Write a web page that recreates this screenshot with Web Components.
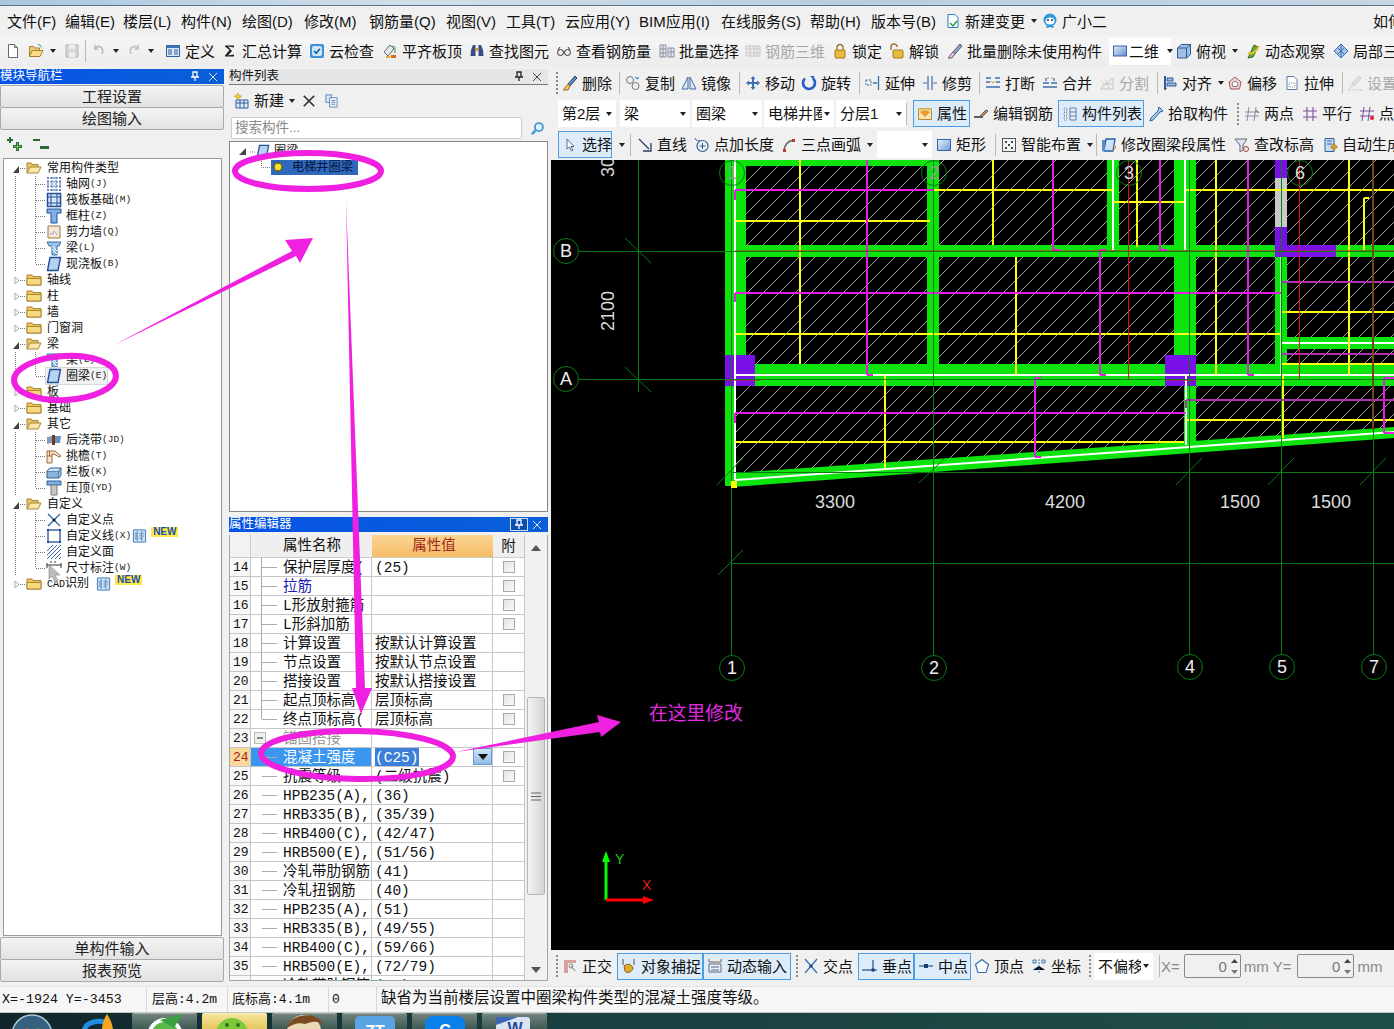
<!DOCTYPE html>
<html lang="zh">
<head>
<meta charset="utf-8">
<title>钢筋算量</title>
<style>
html, body { margin: 0; padding: 0; height: 100%; overflow: hidden; background: #f0f0f0; }
body { position: relative; font-family: "Liberation Sans", "Noto Sans CJK SC", sans-serif; }
</style>
</head>
<body>
<gl-app>
  <gl-nav-panel slot="nav"></gl-nav-panel>
  <gl-list-panel slot="list"></gl-list-panel>
  <gl-prop-panel slot="prop"></gl-prop-panel>
  <gl-draw-area slot="draw"></gl-draw-area>
</gl-app>
<gl-callouts></gl-callouts>
<script>
const CJK = '"Liberation Sans", "Noto Sans CJK SC", sans-serif';
const MONO = '"Liberation Mono", "Noto Sans CJK SC", monospace';

// 16x16 toolbar pictures
const ICONS = {
  doc: '<path d="M3.5 1.5h6l3 3v10h-9z" fill="#fff" stroke="#667"/><path d="M9.5 1.5v3h3" fill="#dde" stroke="#667"/>',
  open: '<path d="M1.5 13.5v-10h4l1 1.500h5v2" fill="#f0cf78" stroke="#a57f2a"/><path d="M1.500 13.500l2.500-6h11l-3 6z" fill="#f6dc8c" stroke="#a57f2a"/><path d="M10 1.500c2 0 3 1 3 3" fill="none" stroke="#3a7"/>',
  save: '<path d="M2 2h12v12H2z" fill="#d5d5d5" stroke="#b5b5b5"/><path d="M5 2h6v4H5zM5 9h6v5H5z" fill="#eee"/>',
  undo: '<path d="M5 4c5-2 8 2 6 7" fill="none" stroke="#c2c2c2" stroke-width="2"/><path d="M3 1v6h5z" fill="#c2c2c2"/>',
  redo: '<path d="M11 4c-5-2-8 2-6 7" fill="none" stroke="#c9c9c9" stroke-width="2"/><path d="M13 1v6H8z" fill="#c9c9c9"/>',
  def: '<path d="M1.500 2.500h13v11h-13z" fill="#dbe7f7" stroke="#2f5f9f"/><path d="M1.500 2.500h13v2.500h-13z" fill="#3f74b8"/><path d="M3 7h4M3 9h4M3 11h4M9 7h4M9 9h4M9 11h4" stroke="#2f5f9f"/>',
  sigma: '<path d="M3 2.500h9v2L6 3.500l4 4.500-4 4.500 6-1v2H3v-1l4.500-5.500L3 3.500z" fill="#222"/>',
  cloud: '<rect x="1" y="1" width="14" height="14" rx="2" fill="#3d8fd8"/><rect x="3" y="3" width="10" height="10" rx="2" fill="#cfe5f8"/><path d="M5 8l2.200 2.200L11 5.800" fill="none" stroke="#1f62a8" stroke-width="1.700"/>',
  flush: '<path d="M2 9l6-7 4 4-6 7z" fill="#e6e6e6" stroke="#666"/><path d="M9 12h5v3H9z" fill="#d8651c"/><path d="M4 13h4v2H4z" fill="#e5a92a"/><path d="M10 3l3 1v6" fill="none" stroke="#3a9b3a"/>',
  find: '<path d="M2 7l2-5h2.500v11H1.500zM14 7l-2-5H9.500v11h5z" fill="#3a4b88"/><path d="M6.500 5h3v3h-3z" fill="#c59a2c"/>',
  look: '<circle cx="4.500" cy="9.500" r="3" fill="none" stroke="#333"/><circle cx="11.500" cy="9.500" r="3" fill="none" stroke="#333"/><path d="M7.500 9h1M2 7l2-3M14 7l-2-3" stroke="#333"/>',
  batch: '<path d="M1 2h6v12H1zM9 5h6v9H9z" fill="#e4e6ec" stroke="#8b8fa3"/><path d="M4 2v12M1 6h6M1 10h6M12 5v9M9 9h6" stroke="#8b8fa3"/>',
  grid3: '<path d="M1 3h14v10H1z" fill="#eee" stroke="#c6c6c6"/><path d="M5 3v10M9 3v10M12 3v10M1 6h14M1 10h14" stroke="#c6c6c6"/>',
  lock: '<path d="M5 7V4.500a3 3 0 0 1 6 0V7" fill="none" stroke="#9a7b2c" stroke-width="1.400"/><rect x="3" y="7" width="10" height="8" rx="1" fill="#e8ba3f" stroke="#a37b1b"/>',
  unlock: '<path d="M2 7V4a3 3 0 0 1 6 0" fill="none" stroke="#9a7b2c" stroke-width="1.400"/><rect x="4" y="7" width="10" height="8" rx="1" fill="#e8ba3f" stroke="#a37b1b"/>',
  brush: '<path d="M13 1l2 2-7 8-2-2z" fill="#8fa6c4" stroke="#556"/><path d="M6 9l2 2-3 4-4 0c2-1 2-4 5-6z" fill="#d9c7ea" stroke="#756"/>',
  plane: '<rect x="1.500" y="3" width="13" height="10" fill="url(#gb)" stroke="#3563a8"/><defs><linearGradient id="gb" x1="0" y1="0" x2="1" y2="1"><stop offset="0" stop-color="#e8f0fb"/><stop offset="1" stop-color="#5d8ed0"/></linearGradient></defs>',
  cube: '<path d="M1.500 5l4-3.500h9v10l-4 3.500h-9z" fill="#9fc0e4" stroke="#2c5c90"/><path d="M1.500 5h9v10M10.500 5l4-3.500" fill="none" stroke="#2c5c90"/>',
  orbit: '<path d="M9 2l4 2-5 10-5 1z" fill="#63a83a" stroke="#3a6a22"/><path d="M3 10c4 2 9-2 11-7" fill="none" stroke="#e6c22f" stroke-width="2"/>',
  local: '<path d="M8 1l7 7-7 7-7-7z" fill="#a7c4ea" stroke="#3f6fb0"/><path d="M4 4l8 8M12 4l-8 8M8 1v14" stroke="#3f6fb0"/>',
  del: '<path d="M13 1l2 2-7 8-2-2z" fill="#5b8ac7" stroke="#345"/><path d="M6 9l2 2-2 4-5 0c2-1 2-4 5-6z" fill="#eec64a" stroke="#964"/>',
  copy: '<circle cx="5" cy="5" r="3.500" fill="none" stroke="#777"/><circle cx="10.500" cy="11" r="3.500" fill="none" stroke="#777"/><path d="M10 2l3 2M13 4l0-2" stroke="#2e6fb8"/>',
  mirror: '<path d="M7 2v12H1zM9 2v12h6z" fill="#dfe9f6" stroke="#416b9e"/>',
  move: '<path d="M8 1l2.500 3h-1.500v3h3V5.500l3 2.500-3 2.500V9h-3v3h1.500L8 15l-2.500-3H7V9H4v1.500L1 8l3-2.500V7h3V4H5.500z" fill="#3f73ad"/>',
  rotate: '<path d="M4 3.500a6 6 0 1 0 8 0" fill="none" stroke="#2260c4" stroke-width="2.600"/><path d="M9 1h4v4z" fill="#2260c4"/>',
  extend: '<path d="M1 5h5v5H1z" fill="none" stroke="#3d6fa8" stroke-dasharray="2 1"/><path d="M8 8h4M13.500 1v14" stroke="#3d6fa8" stroke-width="1.300"/>',
  trim: '<path d="M6 1v14M10 1v14M1 8h4M11 8h4" stroke="#3d6fa8" stroke-width="1.200"/>',
  breakk: '<path d="M1 3h5M10 3h5M1 12h14M1 7h4M11 7h4" stroke="#3d6fa8" stroke-width="1.300"/><path d="M6 6l2 2 2-2" fill="none" stroke="#c09a2a"/>',
  merge: '<path d="M1 12h14M1 8h6M9 8h6M4 3v3M12 3v3" stroke="#3d6fa8" stroke-width="1.300"/><path d="M5 3h2M9 3h2" stroke="#c09a2a"/>',
  split: '<path d="M1 14L14 3v11z" fill="#eee" stroke="#c7c7c7"/><path d="M3 9h10M7 5l3 9" stroke="#c7c7c7"/>',
  alignl: '<path d="M3 1v14" stroke="#2f5f9f" stroke-width="2"/><path d="M5 3h6v3H5zM5 8h9v3H5z" fill="#9ab9df" stroke="#2f5f9f"/><path d="M3 14l2-1" stroke="#c22"/>',
  offset: '<path d="M8 2l6 5-1.500 7h-9L2 7z" fill="#f1d3cf" stroke="#a55"/><path d="M8 6l3 2.500-1 3H6l-1-3z" fill="#fff" stroke="#777"/>',
  stretch: '<path d="M3 1.500h7l3 3v10H3z" fill="#fff" stroke="#5a7fa8"/><path d="M5 8h6v4H5z" fill="none" stroke="#888" stroke-dasharray="1 1"/>',
  setg: '<path d="M12 1l2 2-7 8-2-2zM5 10l-3 4" fill="#e4e4e4" stroke="#c6c6c6"/><path d="M1 15h14" stroke="#c6c6c6" stroke-dasharray="2 1"/>',
  prop: '<path d="M1.500 2.500h13v11h-13z" fill="#f6e4b4" stroke="#b88a2c"/><path d="M3 6l5 5 5-5-5-2z" fill="#e89a2c"/><path d="M1.500 2.500h13V5h-13z" fill="#e9c77a"/>',
  edit: '<path d="M1 11h9" stroke="#222" stroke-width="1.400"/><path d="M7 10l6-6 2 1-6 6z" fill="#c49a4a" stroke="#555"/>',
  list: '<path d="M2 2h3v3H2zM2 6.500h3v3H2zM2 11h3v3H2z" fill="none" stroke="#888" stroke-dasharray="1 1"/><path d="M8 2h6v12H8z" fill="#e6eef8" stroke="#5f7fa8"/><path d="M8 6h6M8 10h6" stroke="#5f7fa8"/>',
  pick: '<path d="M11 1l4 4-3 1-7 8-3 1 1-3 7-7z" fill="#aad0f0" stroke="#245c94"/>',
  twopt: '<path d="M5 1l-2 14M12 1l-2 14M1 6h14M1 10h14" stroke="#8a8fa8"/><path d="M12 4l3 3" stroke="#c0392b"/>',
  para: '<path d="M5 1v14M11 1v14M1 5h14M1 11h14" stroke="#7a4f9f" stroke-width="1.100"/>',
  ptang: '<path d="M5 1l-2 14M11 1l-2 14M1 5h14M1 10h14" stroke="#7a4f9f"/><circle cx="13" cy="12" r="2" fill="#d22"/>',
  cursor: '<path d="M5 2v10l2.500-2 2 4 1.500-1-2-3.500h3z" fill="#fff" stroke="#667"/>',
  line: '<path d="M2 2l10 10" stroke="#28405f" stroke-width="1.300"/><path d="M14 6v8H6" fill="none" stroke="#28405f" stroke-width="1.300"/>',
  ptlen: '<circle cx="8.500" cy="9" r="5.500" fill="none" stroke="#2c5f95" stroke-width="1.200"/><path d="M8.500 6v6M5.500 9h6" stroke="#2c5f95"/><path d="M1 1c1 3 3 3 5 2" fill="none" stroke="#2c5f95"/>',
  arc: '<path d="M3 15c0-7 3-11 10-12" fill="none" stroke="#666" stroke-width="1.600"/><path d="M11 2h3v3h-3zM2 12h3v3H2z" fill="#b5392f"/>',
  rect: '<rect x="1.500" y="2.500" width="13" height="11" fill="url(#gb2)" stroke="#3563a8"/><defs><linearGradient id="gb2" x1="0" y1="0" x2="1" y2="1"><stop offset="0" stop-color="#eef4fc"/><stop offset="1" stop-color="#6b9ad8"/></linearGradient></defs>',
  smart: '<rect x="1.500" y="1.500" width="13" height="13" fill="#f4f4f4" stroke="#555"/><path d="M4 4h2v2H4zM10 4h2v2h-2zM7 7h2v2H7zM4 10h2v2H4zM10 10h2v2h-2z" fill="#345"/>',
  modify: '<path d="M5 2h9l-2 12H3z" fill="#cfe2f6" stroke="#1f5f9f" stroke-width="1.300"/><path d="M1 3h3v11H1z" fill="#5a8fc8"/><path d="M12 8l3 2-3 4" fill="none" stroke="#c09a2a"/>',
  check: '<path d="M1 2h12L9 8v5l-3 2V8z" fill="#dde8f4" stroke="#667"/><circle cx="12" cy="12" r="2.500" fill="none" stroke="#b03a2e"/>',
  auto: '<path d="M3 1.500h9v13H3z" fill="#c7dcf4" stroke="#2f5f9f"/><path d="M5 4h5M5 7h5" stroke="#2f5f9f"/><path d="M9 9h2V7h2v2h2v2h-2v2h-2v-2H9z" fill="#d9a32a" stroke="#8a6516" stroke-width=".5"/>',
  ortho: '<path d="M2 2h12v3H6v10H2z" fill="#d8a09c"/><path d="M9 8l4 5" stroke="#777"/><circle cx="9" cy="8" r="2" fill="none" stroke="#888"/>',
  snap: '<path d="M2 1v6M13 1v6" stroke="#555"/><path d="M3 8c3-3 8-2 9 2 0 4-7 6-8 3z" fill="#e0a92f" stroke="#8a6516"/>',
  dyn: '<path d="M2 1v3h12V1M2 6h12v8H2z" fill="#f0f0f0" stroke="#666"/><path d="M4 9h8M4 12h8" stroke="#3a6aa8"/>',
  cross: '<path d="M2 1l12 14M14 1L2 15" stroke="#3a70b0" stroke-width="1.300"/><circle cx="8" cy="8" r="1.600" fill="#1f3f70"/>',
  perp: '<path d="M0 12h15" stroke="#2a5a98" stroke-width="1.300"/><path d="M11 2v10" stroke="#2a5a98" stroke-width="1.300"/><circle cx="11" cy="12" r="1.800" fill="#1f3f70"/>',
  mid: '<path d="M1 8h14" stroke="#2a5a98" stroke-width="1.200"/><rect x="6" y="6" width="4" height="4" fill="#1f3f70"/>',
  vertex: '<path d="M8 1.500l6.500 5-2.500 8H4l-2.500-8z" fill="#fff" stroke="#3a70b0" stroke-width="1.200"/>',
  coord: '<path d="M8 1v14M2 12L8 8l6 4" stroke="#3a70b0" stroke-dasharray="2 1"/><path d="M2 2h3v3H2zM11 2h3v3h-3z" fill="none" stroke="#3a70b0"/>',
  newb: '<path d="M2 7h12v8H2z" fill="#e2edf8" stroke="#2f5f9f"/><path d="M2 10h12M6 7v8M10 7v8" stroke="#2f5f9f"/><path d="M4 0l1.200 2.400L7.600 3 5.600 5 4 6 2.400 5 .5 3l2.400-.6z" fill="#eecb2e" stroke="#a88a10" stroke-width=".5"/>',
  x: '<path d="M2 2l12 12M14 2L2 14" stroke="#333" stroke-width="2"/>',
  dup: '<path d="M2 2h6v8H2z" fill="#dbe7f5" stroke="#5f86b5"/><path d="M6 5h8v10H6z" fill="#eef4fb" stroke="#5f86b5"/><path d="M8 8h4M8 10h4M8 12h4" stroke="#5f86b5"/>',
  search: '<circle cx="9.500" cy="6.500" r="4.300" fill="#e5f2fb" stroke="#4a9ad4" stroke-width="2"/><path d="M6.500 9.500L2 14" stroke="#4a9ad4" stroke-width="2.600"/>',
  changeDoc: '<path d="M3 1.500h7l3 3v10H3z" fill="#fff" stroke="#2f7fb8"/><path d="M5 10l3 3 4-5" fill="none" stroke="#2a9a4a" stroke-width="1.500"/>',
  robot: '<circle cx="8" cy="7" r="6.500" fill="#2d96dd"/><ellipse cx="8" cy="8" rx="4.500" ry="3.500" fill="#fff"/><circle cx="6" cy="7" r="1" fill="#135"/><circle cx="10" cy="7" r="1" fill="#135"/><path d="M4 13l1 2 3-1 3 1 1-2z" fill="#2d96dd"/>'
};
const svgIcon = (name, size = 16) => `<svg width="${size}" height="${size}" viewBox="0 0 16 16" aria-hidden="true">${ICONS[name] || ''}</svg>`;

// [icon, text, x, flags, width]; flags: a active, d disabled, c caret, s select, w white, | separator, : grip
const TOOLBARS = {
  menu: [
    [0,'文件(F)',7],[0,'编辑(E)',65],[0,'楼层(L)',123],[0,'构件(N)',181],[0,'绘图(D)',242],[0,'修改(M)',304],
    [0,'钢筋量(Q)',369],[0,'视图(V)',446],[0,'工具(T)',506],[0,'云应用(Y)',565],[0,'BIM应用(I)',639],[0,'在线服务(S)',721],
    [0,'帮助(H)',810],[0,'版本号(B)',871],['changeDoc','新建变更',945,'c'],['robot','广小二',1042],[0,'如何',1373]
  ],
  main: [
    ['doc','',5],['open','',28,'c'],['save','',64],[0,'',85,'|'],['undo','',91,'c'],['redo','',126,'c'],
    ['def','定义',165],['sigma','汇总计算',222],['cloud','云检查',309],['flush','平齐板顶',382],['find','查找图元',469],
    ['look','查看钢筋量',556],['batch','批量选择',659],['grid3','钢筋三维',745,'d'],['lock','锁定',832],['unlock','解锁',889],
    ['brush','批量删除未使用构件',947],['plane','二维',1109,'cw',62],['cube','俯视',1176,'c'],['orbit','动态观察',1245],['local','局部三维',1333]
  ],
  edit: [
    [0,'',556,':'],['del','删除',562],[0,'',619,'|'],['copy','复制',625],['mirror','镜像',681],[0,'',739,'|'],['move','移动',745],['rotate','旋转',801],
    [0,'',859,'|'],['extend','延伸',865],['trim','修剪',922],[0,'',979,'|'],['breakk','打断',985],['merge','合并',1042],['split','分割',1099,'d'],
    [0,'',1157,'|'],['alignl','对齐',1162,'c'],['offset','偏移',1227],['stretch','拉伸',1284],[0,'',1342,'|'],['setg','设置',1347,'d']
  ],
  layer: [
    [0,'第2层',558,'s',58],[0,'梁',620,'s',70],[0,'圈梁',692,'s',70],[0,'电梯井圈梁',764,'s',70],[0,'分层1',836,'s',70],[0,'',906,'|'],
    ['prop','属性',913,'a',57],['edit','编辑钢筋',973],['list','构件列表',1058,'a',86],['pick','拾取构件',1148],[0,'',1237,':'],
    ['twopt','两点',1244],['para','平行',1302],['ptang','点角',1359]
  ],
  draw: [
    ['cursor','选择',558,'a',54],[0,'▾',617,'t'],[0,'',630,'|'],['line','直线',637],['ptlen','点加长度',694],['arc','三点画弧',781,'c'],[0,'',877,'s',55],
    ['rect','矩形',936],[0,'',995,'|'],['smart','智能布置',1001,'c'],[0,'',1096,'|'],['modify','修改圈梁段属性',1101],['check','查改标高',1234],['auto','自动生成',1322]
  ],
  snap: [
    [0,'',556,':'],['ortho','正交',562],['snap','对象捕捉',617,'a',86],['dyn','动态输入',703,'a',88],[0,'',796,':'],['cross','交点',803],
    ['perp','垂点',858,'a',56],['mid','中点',914,'a',57],['vertex','顶点',974],['coord','坐标',1031],[0,'',1089,':'],[0,'不偏移',1094,'s',59],[0,'',1159,'|']
  ]
};

class GlToolbar extends HTMLElement {
  connectedCallback() {
    const items = TOOLBARS[this.getAttribute('row')];
    const origin = Number(this.getAttribute('origin') || 0);
    const size = this.getAttribute('size') || '15px';
    let html = '';
    items.forEach((it, n) => {
      const [icon, text, x, flags = '', w] = it;
      const next = items[n + 1] ? items[n + 1][2] : null;
      const width = next === null ? '' : `width:${next - x}px;`;
      if (flags === '|' || flags === ':') {
        html += `<div class="it" style="${width}"><span class="${flags === '|' ? 'sep' : 'grip'}"></span></div>`;
      } else if (flags === 's') {
        html += `<div class="it" style="${width}"><div class="sel" style="width:${w}px"><span class="st">${text}</span><span class="car"></span></div></div>`;
      } else if (flags === 't') {
        html += `<div class="it" style="${width}"><span class="car"></span></div>`;
      } else {
        let cls = flags.includes('a') ? 'btn on' : 'btn';
        if (flags.includes('d')) cls += ' dis';
        if (flags.includes('w')) cls += ' wh';
        const inner = `${icon ? svgIcon(icon) : ''}${text ? `<span class="tx">${text}</span>` : ''}${flags.includes('c') ? '<span class="car"></span>' : ''}`;
        html += `<div class="it" style="${width}"><div class="${cls}" ${w ? `style="width:${w}px"` : ''}>${inner}</div></div>`;
      }
    });
    const lead = items[0][2] - origin;
    this.attachShadow({ mode: 'open' });
    this.shadowRoot.innerHTML = `
      <style>
        :host { display: flex; align-items: stretch; overflow: hidden; box-sizing: border-box; padding-left: ${lead}px; font: ${size}/1 ${CJK}; color: #111; white-space: nowrap; }
        .it { display: flex; align-items: center; flex: none; height: 100%; }
        .btn { display: flex; align-items: center; gap: 4px; flex: none; height: 100%; box-sizing: border-box; }
        .btn.on { height: 27px; padding-left: 3px; border: 1px solid #4d9de0; background: #dcecfb; }
        .btn.wh { background: #fff; height: 27px; padding-left: 3px; gap: 1px; }
        .btn svg { flex: none; }
        .dis { color: #a8a8a8; }
        .sep { width: 1px; height: 22px; background: #b8b8b8; }
        .grip { width: 2px; height: 22px; background: repeating-linear-gradient(#8a8a8a 0 2px, transparent 2px 4px); }
        .sel { display: flex; align-items: center; height: 27px; background: #fff; padding: 0 4px; box-sizing: border-box; }
        .st { flex: 1; overflow: hidden; }
        .car { width: 0; height: 0; border: 3px solid transparent; border-top: 4px solid #222; border-bottom: 0; margin-left: 2px; flex: none; }
        .wh .car { margin-left: 7px; }
      </style>${html}`;
  }
}

class GlPanelTitle extends HTMLElement {
  connectedCallback() {
    const active = this.hasAttribute('active');
    const boxed = this.hasAttribute('boxed');
    this.attachShadow({ mode: 'open' });
    this.shadowRoot.innerHTML = `
      <style>
        :host { display: flex; align-items: center; height: 15px; flex: none; overflow: hidden; font: 12.500px/15px ${CJK};
          background: ${active ? 'linear-gradient(90deg,#0753e6,#0a5fd8)' : '#e6e6e6'}; color: ${active ? '#fff' : '#111'};
          ${active ? '' : 'border-bottom: 1px solid #777; box-sizing: content-box;'} }
        .t { flex: 1; }
        .b { width: 18px; display: flex; justify-content: center; align-items: center; height: 13px; box-sizing: border-box; }
        .boxed { border: 1px solid #cde; background: #0a4fb0; }
      </style>
      <span class="t"><slot></slot></span>
      <span class="b ${boxed ? 'boxed' : ''}"><svg width="10" height="11" viewBox="0 0 10 11"><path d="M3 1h4v5H3zM1 6h8M5 6v4" fill="none" stroke="${active ? '#fff' : '#222'}" stroke-width="1.300"/></svg></span>
      <span class="b" style="margin-right:2px"><svg width="10" height="10" viewBox="0 0 10 10"><path d="M1 1l8 8M9 1l-8 8" stroke="${active ? '#dce8ff' : '#444'}"/></svg></span>`;
  }
}

class GlSideButton extends HTMLElement {
  constructor() {
    super();
    this.attachShadow({ mode: 'open' });
    this.shadowRoot.innerHTML = `
      <style>
        :host { display: flex; align-items: center; justify-content: center; height: 21px; flex: none; box-sizing: content-box;
          background: linear-gradient(#f4f4f4,#e2e2e2); border: 1px solid #a9a9a9; border-radius: 2px; font: 15px/1 ${CJK}; color: #222; letter-spacing: 0; }
      </style><slot></slot>`;
  }
}

// tree glyphs used by both tree panels
const TREE_ICONS = {
  fopen: '<path d="M1 13V3h4l1 1.500h6V7" fill="#e9c66c" stroke="#a8852e"/><path d="M1 13l3-6h11l-3 6z" fill="#fbe7ae" stroke="#a8852e"/>',
  fclose: '<path d="M1 13V3h5l1 1.500h8V13z" fill="#f2c659" stroke="#a8852e"/><path d="M1 6.500h14V13H1z" fill="#f7d982" stroke="#a8852e"/>',
  grid: '<path d="M2 1v14M6 1v14M10 1v14M14 1v14M1 2h14M1 6h14M1 10h14M1 14h14" stroke="#2f5fa8" stroke-dasharray="2 1"/>',
  raft: '<path d="M1.500 1.500h13v13h-13z" fill="#d8e6f6" stroke="#1f4f98" stroke-width="1.500"/><path d="M1 5h14M1 11h14M5 1v14M11 1v14" stroke="#1f4f98"/>',
  col: '<path d="M1 1h14v4h-4v10H5V5H1z" fill="#7fb0e6" stroke="#1f4f98"/>',
  wall: '<path d="M2 2h12v12H2z" fill="#f4e8dc" stroke="#a8743f"/><path d="M4 11l1-2 2 1 1-3 2 2 1 2" fill="none" stroke="#aab"/>',
  beam: '<path d="M1 2h14l-2 4h-2v9H6V6H3z" fill="#9cc4ea" stroke="#2f6fa8"/><path d="M6 6l5 5M6 9l5 5" stroke="#fff"/>',
  slab: '<path d="M4 1.500h10.500L12 14.500H1.500z" fill="#b7d2f1" stroke="#1f4f98" stroke-width="1.400"/>',
  post: '<path d="M1 5l5-1v7l-5 1z" fill="#8a9ab0"/><path d="M6 3h3v10H6z" fill="#6a3b1f"/><path d="M9 4h6l-1 7H9z" fill="#6b8fc0"/>',
  eave: '<path d="M1 3h8l6 5-2 1-5-3H6v9H1z" fill="#f5e3cf" stroke="#a06a30"/><path d="M1 8h5M3.500 3v5" stroke="#a06a30"/>',
  para: '<path d="M1 7h12v7H1z" fill="#8ab4de" stroke="#2f5f98"/><path d="M1 7l3-3h11l-2 3M13 14l2-3V4" fill="#cfe2f5" stroke="#2f5f98"/>',
  cope: '<path d="M1 1h14v4H1z" fill="#7fb0e6" stroke="#2f5f98"/><path d="M5 5h6v10H5z" fill="#c8c8c8" stroke="#777"/>',
  xpt: '<path d="M2 2l12 12M14 2L2 14" stroke="#2f5fa8" stroke-width="1.300"/><circle cx="8" cy="8" r="1.500" fill="#123"/>',
  xln: '<rect x="2" y="2" width="12" height="12" fill="none" stroke="#1f4f98" stroke-width="1.300"/><path d="M1 1h2v2H1zM13 1h2v2h-2zM1 13h2v2H1zM13 13h2v2h-2z" fill="#1f4f98"/>',
  xfc: '<path d="M1 7l6-6M1 11l10-10M1 15L15 1M5 15L15 5M9 15l6-6M13 15l2-2" stroke="#3a6aa8"/>',
  dim: '<path d="M1 3v5M15 3v5M1 5h14" stroke="#333"/><path d="M5 1v2M9 1v2" stroke="#333"/>',
  bulb: '<circle cx="8" cy="8" r="4.500" fill="#f4e22f" stroke="#6a5a10"/><path d="M8 1v3M8 12v3M1 8h3M12 8h3M3 3l2 2M11 11l2 2M13 3l-2 2M5 11l-2 2" stroke="#5a5a10"/>'
};
const treeIcon = n => `<svg width="16" height="16" viewBox="0 0 16 16" style="flex:none">${TREE_ICONS[n]}</svg>`;
const newBadge = `<svg width="15" height="16" viewBox="0 0 16 16" style="flex:none;margin-left:1px"><path d="M1.500 1.500h13v13h-13z" fill="#cfe2f5" stroke="#3a78b8"/><path d="M5.500 3v10M10.500 3v10M3 5.500h2M3 8h2M3 10.500h2M8 5.500h2M8 8h2M8 10.500h2M12 5.500h1M12 8h1" stroke="#3a78b8"/></svg><span class="new">NEW</span>`;

const NAV_TREE = [
  ['r','常用构件类型',1],['c','轴网','(J)','grid',1],['c','筏板基础','(M)','raft',1],['c','框柱','(Z)','col',1],['c','剪力墙','(Q)','wall',1],['c','梁','(L)','beam',1],['e','现浇板','(B)','slab',1],
  ['r','轴线',0],['r','柱',0],['r','墙',0],['r','门窗洞',0],
  ['r','梁',1],['c','梁','(L)','beam',1],['e','圈梁','(E)','slab',1,'hi'],
  ['r','板',0],['r','基础',0],
  ['r','其它',1],['c','后浇带','(JD)','post',1],['c','挑檐','(T)','eave',1],['c','栏板','(K)','para',1],['e','压顶','(YD)','cope',1],
  ['r','自定义',1],['c','自定义点','','xpt',1],['c','自定义线','(X)','xln',1,'new'],['c','自定义面','','xfc',1],['e','尺寸标注','(W)','dim',1],
  ['r','<span class="cad">CAD</span>识别',0,'new']
];

class GlNavTree extends HTMLElement {
  connectedCallback() {
    const rows = NAV_TREE.map(r => {
      if (r[0] === 'r') {
        const open = r[2];
        const arrow = open
          ? '<path d="M18 6v7h-6z" fill="#444"/>'
          : '<path d="M14 5l4 3.500-4 3.500z" fill="#fff" stroke="#aaa"/>';
        const guide = `<svg class="g" width="25" height="16">${arrow}<path d="M19 8.500h6" stroke="#777" stroke-dasharray="1 1"/></svg>`;
        return `<div class="row">${guide}${treeIcon(open ? 'fopen' : 'fclose')}<span class="t" style="margin-left:5px">${r[1]}</span>${r[3] ? `<span style="margin-left:6px;display:flex;align-items:center">${newBadge}</span>` : ''}</div>`;
      }
      const last = r[0] === 'e';
      const guide = `<svg class="g" width="45" height="16"><path d="M14.500 0v16" stroke="#777" stroke-dasharray="1 1"/><path d="M34.500 0v${last ? 8 : 16}M35 8.500h10" stroke="#777" stroke-dasharray="1 1"/></svg>`;
      return `<div class="row">${guide}<span class="lab ${r[5] === 'hi' ? 'hi' : ''}">${treeIcon(r[3])}<span class="t" style="margin-left:4px">${r[1]}</span><small>${r[2]}</small></span>${r[5] === 'new' ? newBadge : ''}</div>`;
    }).join('');
    this.attachShadow({ mode: 'open' });
    this.shadowRoot.innerHTML = `
      <style>
        :host { display: block; flex: 1; min-height: 0; box-sizing: border-box; margin: 0 2px 0 3px; padding: 1px 0 0 0; background: #fff; border: 1px solid #9a9a9a; font: 12px/16px ${CJK}; color: #111; overflow: hidden; }
        .row { display: flex; align-items: center; height: 16px; white-space: nowrap; }
        .g { flex: none; margin-left: -3px; }
        .lab { display: flex; align-items: center; height: 16px; }
        .hi { background: #f0f0f0; outline: 1px solid #d8d8d8; }
        small { font: 9.500px/16px ${MONO}; color: #222; }
        .cad { font: 10px/16px ${MONO}; }
        .new { font: bold 10px/10px "Liberation Sans", sans-serif; background: #ffe94a; color: #1a4fb0; padding: 0 2px; margin: -8px 0 0 4px; }
      </style>${rows}`;
  }
}

class GlNavPanel extends HTMLElement {
  constructor() {
    super();
    this.attachShadow({ mode: 'open' });
    this.shadowRoot.innerHTML = `
      <style>
        :host { display: flex; flex-direction: column; height: 100%; width: 224px; box-sizing: border-box; padding: 1px 0 4px; background: #f0f0f0; }
        .gap { height: 1px; flex: none; }
        .tools { display: flex; align-items: center; gap: 8px; height: 28px; flex: none; padding-left: 6px; }
      </style>
      <gl-panel-title active>模块导航栏</gl-panel-title>
      <div class="gap"></div>
      <gl-side-button>工程设置</gl-side-button>
      <gl-side-button style="margin-top:-1px">绘图输入</gl-side-button>
      <div class="tools">
        <svg width="18" height="16" viewBox="0 0 18 16"><path d="M3 1h2v2h2v2H5v2H3V5H1V3h2zM10 6h3v3h3v3h-3v3h-3v-3H7V9h3z" fill="#2c6a3a"/><path d="M11 7h1v3h3v1h-3v3h-1v-3H8v-1h3z" fill="#6cc24a"/></svg>
        <svg width="18" height="16" viewBox="0 0 18 16"><path d="M1 3h7v2H1zM8 10h9v3H8z" fill="#2c6a3a"/></svg>
      </div>
      <gl-nav-tree></gl-nav-tree>
      <gl-side-button style="margin-top:1px">单构件输入</gl-side-button>
      <gl-side-button style="margin-top:-1px">报表预览</gl-side-button>`;
  }
}

class GlListPanel extends HTMLElement {
  constructor() {
    super();
    this.attachShadow({ mode: 'open' });
    this.shadowRoot.innerHTML = `
      <style>
        :host { display: flex; flex-direction: column; flex: none; height: 444px; box-sizing: border-box; padding: 1px 0 0 1px; font: 13px/1 ${CJK}; color: #111; }
        .bar { display: flex; align-items: center; height: 31px; flex: none; padding-left: 5px; font-size: 15px; gap: 3px; }
        .car { width: 0; height: 0; border: 3px solid transparent; border-top: 4px solid #222; border-bottom: 0; margin: 0 4px 0 2px; }
        .search { display: flex; align-items: center; height: 24px; flex: none; gap: 4px; padding-left: 2px; }
        .input { width: 291px; height: 22px; box-sizing: border-box; background: #fff; border: 1px solid #ccc; border-radius: 2px; padding-left: 3px; line-height: 20px; color: #888; font-size: 13.500px; }
        .tree { flex: 1; min-height: 0; margin-top: 1px; background: #fff; border: 1px solid #888; font-size: 12.200px; padding-top: 1px; box-sizing: border-box; }
        .row { display: flex; align-items: center; height: 16px; white-space: nowrap; }
        .selrow { margin-left: 41px; display: flex; align-items: center; gap: 5px; background: #2f68bd; color: #06153a; height: 15px; width: 87px; padding-left: 0; box-sizing: border-box; }
      </style>
      <gl-panel-title>构件列表</gl-panel-title>
      <div class="bar">
        ${svgIcon('newb')}<span style="margin-left:1px">新建</span><span class="car"></span>${svgIcon('x', 14)}<span style="width:2px"></span>${svgIcon('dup', 15)}
      </div>
      <div class="search"><div class="input">搜索构件...</div><span style="margin-left:4px;line-height:0">${svgIcon('search', 15)}</span></div>
      <div class="tree">
        <div class="row"><svg width="26" height="16" style="flex:none"><path d="M17 5v7h-7z" fill="#444" transform="translate(-1 0)"/><path d="M20 9h6" stroke="#777" stroke-dasharray="1 1"/></svg><svg width="14" height="16" viewBox="0 0 16 16" style="flex:none">${TREE_ICONS.slab}</svg><span style="margin-left:4px">圈梁</span></div>
        <div class="row" style="position:relative"><svg width="10" height="16" style="position:absolute;left:31px;top:0"><path d="M.5 0v8.500H10" fill="none" stroke="#777" stroke-dasharray="1 1"/></svg>
          <div class="selrow">${treeIcon('bulb').replace('width="16" height="16"','width="14" height="14"')}<span style="margin-left:2px">电梯井圈梁</span></div></div>
      </div>`;
  }
}

const PROP_ROWS = [
  [14,'保护层厚度(','(25)',1,1],[15,'拉筋','',1,1,'link'],[16,'L形放射箍筋','',1,1],[17,'L形斜加筋','',1,1],
  [18,'计算设置','按默认计算设置',0,1],[19,'节点设置','按默认节点设置',0,1],[20,'搭接设置','按默认搭接设置',0,1],
  [21,'起点顶标高(','层顶标高',1,1],[22,'终点顶标高(','层顶标高',1,2],[23,'锚固搭接','',0,0,'group'],
  [24,'混凝土强度','(C25)',1,0,'sel'],[25,'抗震等级','(二级抗震)',1,0],[26,'HPB235(A),','(36)',0,0],[27,'HRB335(B),','(35/39)',0,0],
  [28,'HRB400(C),','(42/47)',0,0],[29,'HRB500(E),','(51/56)',0,0],[30,'冷轧带肋钢筋','(41)',0,0],[31,'冷轧扭钢筋','(40)',0,0],
  [32,'HPB235(A),','(51)',0,0],[33,'HRB335(B),','(49/55)',0,0],[34,'HRB400(C),','(59/66)',0,0],[35,'HRB500(E),','(72/79)',0,0],[36,'冷轧带肋钢筋','(63)',0,0]
];

class GlPropGrid extends HTMLElement {
  connectedCallback() {
    const rows = PROP_ROWS.map(([no, name, val, chk, vert, kind]) => {
      const guide = kind === 'group'
        ? '<svg width="30" height="18"><rect x="3.500" y="3.500" width="11" height="11" fill="#eee" stroke="#bbb"/><path d="M6 9h6" stroke="#222"/></svg>'
        : `<svg width="30" height="18"><path d="M10.500 ${vert ? '0' : '9'}V${vert === 1 ? 18 : 9}" stroke="#aaa"/><path d="M11 9.500h15" stroke="#aaa"/></svg>`;
      const sel = kind === 'sel';
      const value = sel
        ? `<span class="hl">${val}</span><span class="dd"><svg width="10" height="6"><path d="M0 0h10L5 6z" fill="#111"/></svg></span>`
        : val;
      return `<div class="row ${kind || ''}">
        <div class="no">${no}</div>
        <div class="nm"><span class="gd">${guide}</span><span class="nt">${name}</span></div>
        <div class="vl">${value}</div>
        <div class="ck">${chk ? '<span class="box"></span>' : ''}</div>
      </div>`;
    }).join('');
    this.attachShadow({ mode: 'open' });
    this.shadowRoot.innerHTML = `
      <style>
        :host { display: flex; flex: 1; min-height: 0; margin-top: 3px; background: #fff; border: solid #9aa; border-width: 0 1px 1px 1px; font: 14.500px/20px ${CJK}; color: #111; overflow: hidden; }
        .table { width: 294px; flex: none; overflow: hidden; border-right: 1px solid #c4c4c4; box-sizing: content-box; }
        .head { display: flex; height: 23px; background: #efefef; border-bottom: 1px solid #ccc; box-sizing: border-box; }
        .head .no { border-right: 1px solid #ccc; width: 21px; background: #f2f2f2; box-sizing: border-box; }
        .head .nm { width: 121px; box-sizing: border-box; padding-left: 32px; line-height: 21px; border: 0; font-family: ${CJK}; }
        .head .vl { width: 121px; box-sizing: border-box; justify-content: center; border: 0; color: #a2281a; line-height: 21px; background: linear-gradient(#fbd593,#f6bc66); font-family: ${CJK}; }
        .head .ck { width: 31px; text-align: center; line-height: 21px; }
        .row { display: flex; height: 19px; box-sizing: border-box; border-bottom: 1px solid #c6c6c6; white-space: nowrap; }
        .no { width: 21px; flex: none; box-sizing: border-box; border-right: 1px solid #c6c6c6; padding-left: 3px; font: 13px/20px ${MONO}; color: #111; background: #f8f8f8; overflow: hidden; }
        .nm { width: 121px; flex: none; display: flex; box-sizing: border-box; border-right: 1px solid #c6c6c6; overflow: hidden; font-family: ${MONO}; }
        .gd { flex: none; line-height: 0; width: 32px; }
        .nt { overflow: hidden; }
        .vl { width: 121px; flex: none; box-sizing: border-box; border-right: 1px solid #c6c6c6; padding-left: 3px; display: flex; font-family: ${MONO}; overflow: hidden; }
        .ck { width: 31px; flex: none; display: flex; align-items: center; justify-content: center; }
        .box { width: 10px; height: 10px; border: 1px solid #a8a8a8; background: linear-gradient(135deg,#e4e4e4,#fafafa); }
        .link .nt { color: #1a1ab0; }
        .group .nt { color: #999; }
        .sel .no { background: #fbd99a; color: #a2281a; }
        .sel .nm { background: #3b96f0; color: #fff; }
        .hl { background: #3b7fd8; color: #fff; height: 18px; }
        .dd { margin-left: auto; width: 19px; height: 17px; display: flex; align-items: center; justify-content: center; background: linear-gradient(#cfe3f8,#8fbbe8); border: 1px solid #6a9ad0; box-sizing: border-box; }
        .scroll { flex: 1; display: flex; flex-direction: column; align-items: center; background: #f1f1f1; padding-top: 10px; box-sizing: border-box; }
        .thumb { width: 18px; height: 198px; margin-top: 146px; background: linear-gradient(90deg,#f4f4f4,#d4d4d4); border: 1px solid #b6b6b6; border-radius: 2px; box-sizing: border-box; display: flex; align-items: center; justify-content: center; }
        .arr { flex: none; }
      </style>
      <div class="table">
        <div class="head"><div class="no"></div><div class="nm">属性名称</div><div class="vl">属性值</div><div class="ck">附</div></div>
        ${rows}
      </div>
      <div class="scroll">
        <svg class="arr" width="10" height="6"><path d="M5 0l5 6H0z" fill="#555"/></svg>
        <div class="thumb"><svg width="10" height="9"><path d="M0 1h10M0 4.500h10M0 8h10" stroke="#666"/></svg></div>
        <svg class="arr" width="10" height="6" style="margin-top:72px"><path d="M0 0h10L5 6z" fill="#555"/></svg>
      </div>`;
  }
}

class GlPropPanel extends HTMLElement {
  constructor() {
    super();
    this.attachShadow({ mode: 'open' });
    this.shadowRoot.innerHTML = `
      <style>:host { display: flex; flex-direction: column; flex: 1; min-height: 0; padding: 5px 0 5px 1px; box-sizing: border-box; }</style>
      <gl-panel-title active boxed>属性编辑器</gl-panel-title>
      <gl-prop-grid></gl-prop-grid>`;
  }
}

class GlCadView extends HTMLElement {
  connectedCallback() {
    const line = (x1, y1, x2, y2) => `<line x1="${x1}" y1="${y1}" x2="${x2}" y2="${y2}"/>`;
    const bubble = (x, y, t, c = '#eee') => `<circle cx="${x}" cy="${y}" r="12.500" fill="none" stroke="#0b7a16"/><text x="${x}" y="${y + 6}" fill="${c}" text-anchor="middle">${t}</text>`;
    const greens = [[725,160,21,211],[725,371,10,115],[927,160,12,215],[1107,160,12,90],[1174,160,22,215],[1275,160,12,215],[735,160,198,6],[725,245,669,12],[725,364,669,22],[1281,337,113,12],[1184,386,12,66]]
      .map(r => `<rect x="${r[0]}" y="${r[1]}" width="${r[2]}" height="${r[3]}"/>`).join('');
    const yellow = [[800,160,800,364],[993,160,993,245],[1137,160,1137,247],[1216,160,1216,375],[1016,257,1016,375],[1349,160,1349,375],[885,375,885,468],[1283,375,1283,438],
      [735,221,930,221],[933,190,1113,190],[1113,202,1184,202],[1186,190,1394,190],[735,334,1281,334],[1281,312,1394,312],[1281,364,1394,364],[735,442,1184,442],[1186,420,1394,420],[1364,250,1364,198],[1364,198,1369,198]];
    const magenta = [[867,160,867,375],[867,375,873,375],[1053,160,1053,250],[1053,250,1060,250],[1160,160,1160,250],[1160,250,1167,250],[1248,160,1248,375],[1248,375,1254,375],[1100,250,1100,375],[1100,250,1106,250],[1100,375,1106,375],[1035,378,1035,457],[1035,378,1041,378],[1035,457,1041,457],[1384,378,1384,433],[1384,378,1394,378],[1384,433,1394,433],
      [735,190,933,190],[735,190,735,200],[735,293,1281,293],[735,293,735,302],[735,413,1186,413],[735,413,735,423]];
    const plum = [[1281,282,1394,282],[1281,354,1394,354],[1186,400,1394,400],[1186,400,1186,408]];
    this.attachShadow({ mode: 'open' });
    this.shadowRoot.innerHTML = `
      <style>
        :host { display: block; flex: 1; min-height: 0; background: #000; overflow: hidden; }
        svg { display: block; }
        text { font-family: "Liberation Sans", sans-serif; font-size: 18px; }
      </style>
      <svg width="843" height="790" viewBox="551 160 843 790">
        <defs>
          <pattern id="hatch" width="16" height="16" patternUnits="userSpaceOnUse">
            <path d="M-1 17L17 -1" stroke="#e8e8e8" stroke-width=".7"/>
          </pattern>
        </defs>
        <rect x="551" y="160" width="843" height="790" fill="#000"/>
        <polygon points="735,160 1394,160 1394,430 735,480" fill="url(#hatch)"/>
        <g fill="#0de30d">${greens}<polygon points="733,473 1394,427 1394,438 733,487"/></g>
        <g fill="#7a10e8">
          <rect x="725" y="355" width="30" height="31"/><rect x="1165" y="355" width="31" height="31"/>
          <rect x="1275" y="160" width="12" height="18"/><rect x="1275" y="227" width="12" height="30"/><rect x="1275" y="245" width="61" height="12"/>
        </g>
        <rect x="1275" y="178" width="12" height="49" fill="#c9c9c9"/>
        <g stroke="#fff" stroke-width="2" fill="none">
          ${line(735,160,735,480)}${line(1113,160,1113,250)}${line(1185,160,1185,250)}${line(735,375,1394,375)}${line(1186,375,1186,445)}${line(735,480,1394,432)}${line(1281,343,1394,343)}
          <g stroke-width="1.400">${line(1281,257,1281,375)}</g>
        </g>
        <g stroke="#ffff14" stroke-width="2">${yellow.map(l => line(...l)).join('')}</g>
        <g stroke="#e41ee4" stroke-width="2">${magenta.map(l => line(...l)).join('')}</g>
        <g stroke="#b032b0" stroke-width="2">${plum.map(l => line(...l)).join('')}</g>
        <g stroke="#e01010" stroke-width="1">
          ${line(1128.500,160,1128.500,379)}${line(1299.500,160,1299.500,379)}${line(1372.500,160,1372.500,430)}${line(735,251,1394,251)}${line(725,380,760,380)}${line(1165,380,1196,380)}
        </g>
        <g stroke="#0b7a16" stroke-width="1">
          ${line(731.500,160,731.500,655)}${line(933.500,160,933.500,655)}${line(1189.500,160,1189.500,655)}${line(1281.500,160,1281.500,655)}${line(1373.500,160,1373.500,655)}
          ${line(578,251.500,1394,251.500)}${line(578,379.500,1394,379.500)}${line(731,472.500,1394,472.500)}${line(731,563.500,1394,563.500)}${line(638.500,160,638.500,392)}
          ${line(625,238,651,263)}${line(625,367,651,392)}
          ${line(717,485,743,458)}${line(919,483,945,458)}${line(1176,485,1202,458)}${line(1268,485,1294,458)}${line(1360,485,1386,458)}${line(718,575,743,550)}
        </g>
        <rect x="731" y="481" width="6" height="7" fill="#ff0"/>
        ${bubble(566,251,'B')}${bubble(566,379,'A')}
        ${bubble(732,173,'1','#999')}${bubble(934,173,'2','#999')}${bubble(1129,173,'3','#ddd')}${bubble(1300,173,'6','#ddd')}
        ${bubble(732,668,'1')}${bubble(934,668,'2')}${bubble(1190,667,'4')}${bubble(1282,667,'5')}${bubble(1374,667,'7')}
        <g fill="#dcdcdc" text-anchor="middle">
          <text x="835" y="508">3300</text><text x="1065" y="508">4200</text><text x="1240" y="508">1500</text><text x="1331" y="508">1500</text>
        </g>
        <g fill="#dcdcdc">
          <text transform="translate(614 331) rotate(-90)">2100</text>
          <text transform="translate(614 177) rotate(-90)">3000</text>
        </g>
        <path d="M606 900V856" stroke="#0f0" stroke-width="3"/><path d="M606 851l4 11h-8z" fill="#0f0"/>
        <path d="M606 900h40" stroke="#f00" stroke-width="3"/><path d="M654 900l-11 4v-8z" fill="#f00"/>
        <text x="615" y="864" fill="#1ec81e" style="font-size:14px">Y</text>
        <text x="642" y="890" fill="#e02020" style="font-size:14px">X</text>
      </svg>`;
  }
}

class GlSpinner extends HTMLElement {
  constructor() {
    super();
    this.attachShadow({ mode: 'open' });
    this.shadowRoot.innerHTML = `
      <style>
        :host { display: flex; align-items: center; justify-content: flex-end; box-sizing: border-box; width: 57px; height: 24px; border: 1px solid #888; border-radius: 2px; background: #f0f0f0; color: #777; font: 15px/1 ${CJK}; flex: none; }
        .v { margin-right: 4px; }
        .b { display: flex; flex-direction: column; gap: 7px; margin-right: 2px; }
      </style>
      <span class="v"><slot></slot></span>
      <span class="b"><svg width="7" height="4" style="display:block"><path d="M3.500 0L7 4H0z" fill="#444"/></svg><svg width="7" height="4" style="display:block"><path d="M0 0h7L3.500 4z" fill="#777"/></svg></span>`;
  }
}

class GlDrawArea extends HTMLElement {
  constructor() {
    super();
    this.attachShadow({ mode: 'open' });
    this.shadowRoot.innerHTML = `
      <style>
        :host { display: flex; flex-direction: column; height: 100%; min-width: 0; background: #f0f0f0; }
        .r1 { height: 30px; flex: none; } .r2 { height: 31px; flex: none; } .r3 { height: 31px; flex: none; }
        .bottom { display: flex; height: 32px; margin-bottom: 4px; flex: none; align-items: center; overflow: hidden; font: 15px/1 ${CJK}; color: #888; white-space: nowrap; }
        .sn { height: 32px; flex: none; width: 610px; }
        .lbl { flex: none; }
      </style>
      <gl-toolbar class="r1" row="edit" origin="551"></gl-toolbar>
      <gl-toolbar class="r2" row="layer" origin="551"></gl-toolbar>
      <gl-toolbar class="r3" row="draw" origin="551"></gl-toolbar>
      <gl-cad-view></gl-cad-view>
      <div class="bottom">
        <gl-toolbar class="sn" row="snap" origin="551"></gl-toolbar>
        <span class="lbl">X=</span><gl-spinner style="margin-left:4px">0</gl-spinner>
        <span class="lbl" style="margin-left:3px">mm Y=</span><gl-spinner style="margin-left:6px">0</gl-spinner>
        <span class="lbl" style="margin-left:3px">mm</span>
      </div>`;
  }
}

class GlStatusBar extends HTMLElement {
  constructor() {
    super();
    this.attachShadow({ mode: 'open' });
    this.shadowRoot.innerHTML = `
      <style>
        :host { display: flex; height: 26px; flex: none; box-sizing: border-box; background: #f6f6f6; border-top: 1px solid #e2e2e2; font: 15.500px/25px ${MONO}; color: #111; white-space: nowrap; }
        div { box-sizing: border-box; border-right: 1px solid #d8d8d8; flex: none; overflow: hidden; }
      </style>
      <div style="width:147px;padding-left:2px;font-size:13.300px">X=-1924 Y=-3453</div>
      <div style="width:81px;padding-left:5px;font-size:13px">层高:4.2m</div>
      <div style="width:101px;padding-left:4px;font-size:13px">底标高:4.1m</div>
      <div style="width:48px;padding-left:3px;font-size:13px">0</div>
      <div style="flex:1;padding-left:4px;border:0">缺省为当前楼层设置中圈梁构件类型的混凝土强度等级。</div>`;
  }
}

class GlTaskBar extends HTMLElement {
  constructor() {
    super();
    const tile = (bg, inner) => `<div class="tile" style="background:${bg}"><svg width="65" height="17">${inner}</svg></div>`;
    this.attachShadow({ mode: 'open' });
    this.shadowRoot.innerHTML = `
      <style>
        :host { display: flex; height: 17px; flex: none; overflow: hidden; background: linear-gradient(90deg,#10262b 0,#1a3f40 40%,#1f4f47 100%); border-top: 1px solid #bfc9c6; box-sizing: border-box; }
        .start { width: 132px; flex: none; line-height: 0; }
        .tile { width: 65px; height: 16px; flex: none; margin-right: 5px; border-radius: 2px 2px 0 0; box-shadow: inset 0 1px 0 #ffffff55; line-height: 0; }
        text { font: bold 16px "Liberation Sans", sans-serif; }
      </style>
      <div class="start"><svg width="132" height="17">
        <circle cx="32" cy="22" r="20" fill="#36607f" stroke="#a8c4d8" stroke-width="1.500"/>
        <path d="M22 17q5-3 10 0v8h-10z" fill="#e2602c"/><path d="M33 17q5-3 10 0v8H33z" fill="#5aac3a"/>
        <path d="M84 18c2-10 18-13 26-5" fill="none" stroke="#1f8ee0" stroke-width="5"/>
        <path d="M107 1c-4 6-5 12-5 17h11c0-5-2-11-6-17z" fill="#f5a81c"/>
      </svg></div>
      ${tile('linear-gradient(#75857f,#3e5a54)', '<circle cx="33" cy="23" r="18" fill="#fff"/><circle cx="33" cy="23" r="14" fill="#58b848"/><path d="M28 7l22-6-8 14z" fill="#3aa040"/>')}
      ${tile('linear-gradient(#f6e6a0,#e4c860)', '<circle cx="30" cy="21" r="16" fill="#7fc83a"/><circle cx="25" cy="12" r="2" fill="#2b7a1a"/><circle cx="36" cy="12" r="2" fill="#2b7a1a"/>')}
      ${tile('linear-gradient(#75857f,#3e5a54)', '<ellipse cx="32" cy="18" rx="17" ry="16" fill="#e9d8b4"/><path d="M15 15c2-14 30-18 36-4-8-4-12-2-18 0-6-2-12 0-18 4z" fill="#7a4a20"/>')}
      ${tile('linear-gradient(#75857f,#3e5a54)', '<rect x="13" y="3" width="40" height="24" rx="5" fill="#5aa4e4"/><text x="33" y="24" text-anchor="middle" fill="#fff">ZT</text>')}
      ${tile('linear-gradient(#75857f,#3e5a54)', '<rect x="13" y="3" width="40" height="24" rx="8" fill="#0a80ea"/><text x="33" y="23" text-anchor="middle" fill="#fff">C</text>')}
      ${tile('linear-gradient(#75857f,#3e5a54)', '<rect x="14" y="4" width="34" height="22" rx="3" fill="#d8e4f2"/><path d="M14 4h22l-22 8z" fill="#3a68b8"/><text x="33" y="21" text-anchor="middle" fill="#1f4a9a">W</text>')}`;
  }
}

class GlApp extends HTMLElement {
  constructor() {
    super();
    this.attachShadow({ mode: 'open' });
    this.shadowRoot.innerHTML = `
      <style>
        :host { display: flex; flex-direction: column; width: 1394px; height: 1029px; overflow: hidden; background: #f0f0f0; }
        .strip { height: 6px; flex: none; box-sizing: border-box; background: linear-gradient(90deg,#a9c6df,#d3dfe8 30%,#b8cee0 60%,#c7d6e3); border-bottom: 1px solid #587590; }
        .menu { height: 30px; flex: none; background: #f0f0f0; }
        .main { height: 30px; margin-bottom: 2px; flex: none; background: linear-gradient(#f6f6f6,#ececec); }
        .work { display: flex; flex: 1; min-height: 0; }
        .mid { display: flex; flex-direction: column; width: 320px; flex: none; margin: 0 3px 0 4px; }
        .draw { flex: 1; min-width: 0; }
      </style>
      <div class="strip"></div>
      <gl-toolbar class="menu" row="menu" origin="0"></gl-toolbar>
      <gl-toolbar class="main" row="main" origin="0"></gl-toolbar>
      <div class="work">
        <slot name="nav"></slot>
        <div class="mid"><slot name="list"></slot><slot name="prop"></slot></div>
        <div class="draw"><slot name="draw"></slot></div>
      </div>
      <gl-status-bar></gl-status-bar>
      <gl-task-bar></gl-task-bar>`;
  }
}

// hand-drawn magenta marks laid over the whole window
class GlCallouts extends HTMLElement {
  constructor() {
    super();
    this.attachShadow({ mode: 'open' });
    this.shadowRoot.innerHTML = `
      <style>
        :host { position: absolute; left: 0; top: 0; width: 1394px; height: 1029px; pointer-events: none; }
        svg { display: block; }
        text { font: 18.800px "Noto Sans CJK SC", sans-serif; fill: #e02ae0; }
      </style>
      <svg width="1394" height="1029">
        <g fill="none" stroke="#f020e0" stroke-width="6">
          <ellipse cx="308" cy="171" rx="73" ry="18"/>
          <ellipse cx="65" cy="378" rx="51" ry="22" transform="rotate(-3 65 378)"/>
          <ellipse cx="357" cy="755" rx="96" ry="24" transform="rotate(1 357 755)"/>
        </g>
        <g fill="#f020e0">
          <polygon points="112,346 292,251 285,240 313,238 300,263 296,256"/>
          <polygon points="346,200 356,688 352,688 361,714 372,688 365,688"/>
          <polygon points="456,752 599,722 597,715 621,722 601,737 600,732"/>
        </g>
        <path d="M49 565v14l3-3 3 6 3-1-3-6h5z" fill="#bbb" stroke="#888" stroke-width=".6"/>
        <text x="649" y="720">在这里修改</text>
      </svg>`;
  }
}

customElements.define('gl-toolbar', GlToolbar);
customElements.define('gl-panel-title', GlPanelTitle);
customElements.define('gl-side-button', GlSideButton);
customElements.define('gl-nav-tree', GlNavTree);
customElements.define('gl-nav-panel', GlNavPanel);
customElements.define('gl-list-panel', GlListPanel);
customElements.define('gl-prop-grid', GlPropGrid);
customElements.define('gl-prop-panel', GlPropPanel);
customElements.define('gl-cad-view', GlCadView);
customElements.define('gl-spinner', GlSpinner);
customElements.define('gl-draw-area', GlDrawArea);
customElements.define('gl-status-bar', GlStatusBar);
customElements.define('gl-task-bar', GlTaskBar);
customElements.define('gl-callouts', GlCallouts);
customElements.define('gl-app', GlApp);
</script>
</body>
</html>
